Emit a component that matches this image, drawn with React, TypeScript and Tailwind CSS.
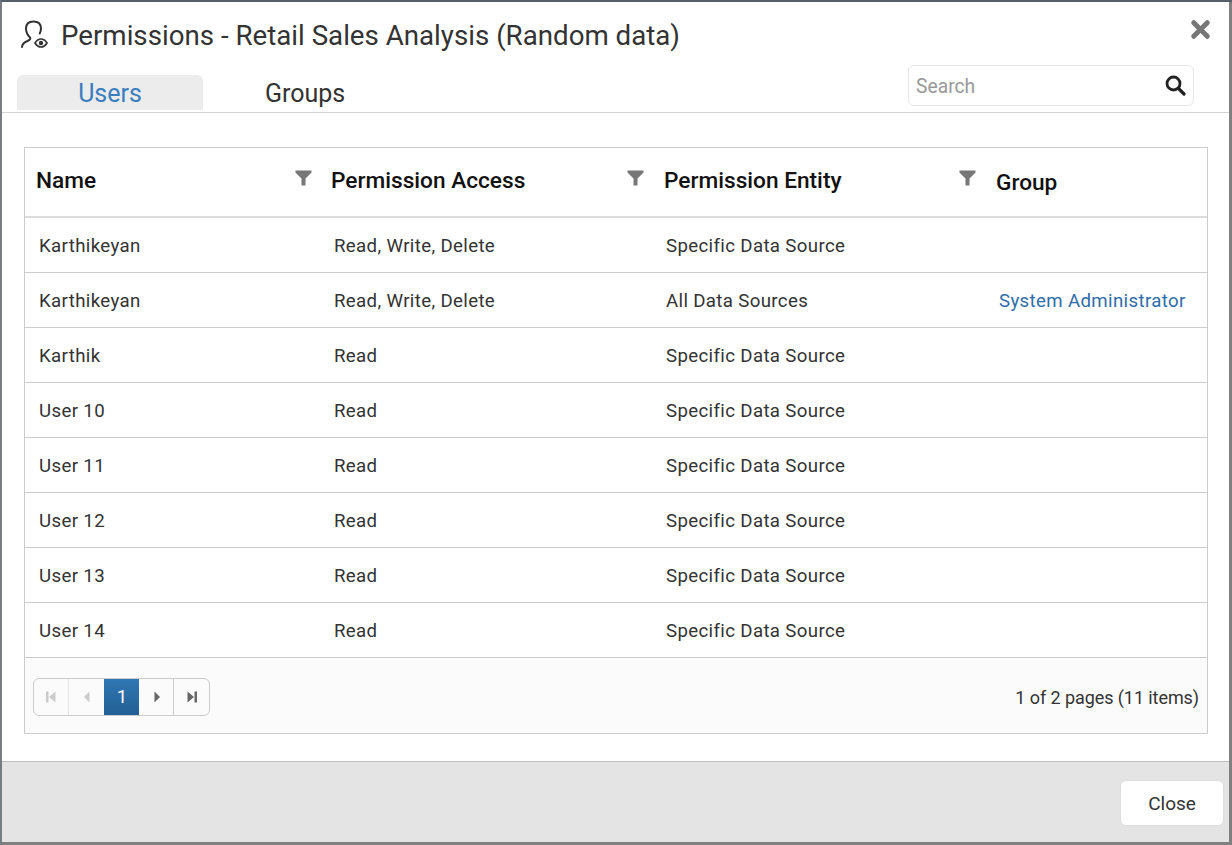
import { X } from "lucide-react";

const rows = [
  { name: "Karthikeyan", access: "Read, Write, Delete", entity: "Specific Data Source", group: "" },
  { name: "Karthikeyan", access: "Read, Write, Delete", entity: "All Data Sources", group: "System Administrator" },
  { name: "Karthik", access: "Read", entity: "Specific Data Source", group: "" },
  { name: "User 10", access: "Read", entity: "Specific Data Source", group: "" },
  { name: "User 11", access: "Read", entity: "Specific Data Source", group: "" },
  { name: "User 12", access: "Read", entity: "Specific Data Source", group: "" },
  { name: "User 13", access: "Read", entity: "Specific Data Source", group: "" },
  { name: "User 14", access: "Read", entity: "Specific Data Source", group: "" },
];

function FilterIcon() {
  return (
    <svg width="17" height="16" viewBox="0 0 17 16" className="fill-[#777777]">
      <path d="M0.5 0.5h16v2L10.5 8.5V15.5H6.5V8.5L0.5 2.5z" />
    </svg>
  );
}

function PermissionIcon() {
  return (
    <svg width="28" height="29" viewBox="0 0 28 29" fill="none" stroke="#333333" strokeWidth="2" strokeLinecap="round">
      <path d="M1 27c.3-3.500 2.500-4.800 5.500-6 2.500-1 3.200-2 2.500-3.500C6.500 15 5 12 5 8.500 5 4 8 1.500 12.500 1.500S20 4 20 8.500c0 1.800-.5 3.600-1.300 5" />
      <path d="M14 23c1.600-2.600 3.700-4 6-4s4.400 1.400 6 4c-1.600 2.600-3.700 4-6 4s-4.400-1.400-6-4z" strokeWidth="1.700" />
      <circle cx="20" cy="23" r="2.200" fill="#333333" stroke="none" />
    </svg>
  );
}

function SearchIcon() {
  return (
    <svg width="21" height="21" viewBox="0 0 21 21" fill="none" stroke="#222222">
      <circle cx="8.500" cy="8.500" r="6.500" strokeWidth="2.800" />
      <path d="M13.500 13.500L19 19" strokeWidth="3.200" strokeLinecap="round" />
    </svg>
  );
}

function PagerIcon({ kind, color }: { kind: "first" | "prev" | "next" | "last"; color: string }) {
  return (
    <svg width="14" height="14" viewBox="0 0 14 14" style={{ fill: color }}>
      {kind === "first" && <path d="M2 1.500h2.500v11H2zM11.500 1.500v11L5 7z" />}
      {kind === "prev" && <path d="M9.500 1.500v11L4 7z" />}
      {kind === "next" && <path d="M4.500 1.500v11L10 7z" />}
      {kind === "last" && <path d="M9.500 1.500H12v11H9.500zM2.500 1.500v11L9 7z" />}
    </svg>
  );
}

export default function App() {
  return (
    <div className="w-[1232px] h-[845px] bg-[#808080] border-t-2 border-t-[#56606a] border-l-2 border-l-[#777d82] pr-[3px] pb-[3px] overflow-hidden font-['Roboto',sans-serif] text-[#333333]">
      <div className="h-full flex flex-col bg-white">
        <div className="h-[111px] relative border-b border-[#d4d4d4] shrink-0">
          <div className="flex items-start pl-[19px] pt-[18px] gap-[12px]">
            <PermissionIcon />
            <h1 className="text-[27.700px] leading-[32px] font-normal">Permissions - Retail Sales Analysis (Random data)</h1>
          </div>
          <button className="absolute right-[15px] top-[14px] text-[#777777]">
            <X size={27} strokeWidth={4.500} />
          </button>
          <div className="absolute left-[15px] bottom-[2px] flex items-end">
            <div className="w-[186px] h-[35px] bg-[#ececec] rounded-t-[6px] text-center text-[25px] leading-[37px] text-[#3a7ebf]">Users</div>
            <div className="w-[204px] h-[35px] text-center text-[25px] leading-[37px]">Groups</div>
          </div>
          <div className="absolute left-[906px] top-[63px] w-[286px] h-[41px] border border-[#e6e6e6] rounded-[6px] flex items-center justify-between pl-[7px] pr-[7px]">
            <span className="text-[19.300px] leading-[41px] pt-[1px] text-[#999999]">Search</span>
            <SearchIcon />
          </div>
        </div>

        <div className="flex-1 pl-[22px] pr-[21px] pt-[34px]">
          <div className="w-[1184px] border border-[#cccccc]">
            <div className="flex h-[70px] border-b-2 border-[#dddddd] text-[22.670px] font-medium text-[#111111]">
              <div className="w-[295px] flex items-center justify-between pl-[11px] pr-[8px]">
                <span className="leading-[62px] mb-[2px]">Name</span>
                <span className="mb-[8px]"><FilterIcon /></span>
              </div>
              <div className="w-[332px] flex items-center justify-between pl-[11px] pr-[8px]">
                <span className="leading-[62px] mb-[2px]">Permission Access</span>
                <span className="mb-[8px]"><FilterIcon /></span>
              </div>
              <div className="w-[332px] flex items-center justify-between pl-[12px] pr-[8px]">
                <span className="leading-[62px] mb-[2px]">Permission Entity</span>
                <span className="mb-[8px]"><FilterIcon /></span>
              </div>
              <div className="flex-1 flex items-center pl-[12px] pt-[2px]">Group</div>
            </div>
            {rows.map((r, i) => (
              <div key={i} className="flex h-[55px] items-center border-b border-[#cccccc] pt-[2px] text-[18.670px] tracking-[0.35px]">
                <div className="w-[295px] pl-[14px]">{r.name}</div>
                <div className="w-[332px] pl-[14px]">{r.access}</div>
                <div className="w-[332px] pl-[14px]">{r.entity}</div>
                <div className="flex-1 pl-[15px] text-[#2f6ca8]">{r.group}</div>
              </div>
            ))}
            <div className="h-[75px] bg-[#fbfbfb] flex items-center justify-between pl-[8px] pr-[8px]">
              <div className="flex h-[38px] w-[177px] mt-[2px] border border-[#cccccc] rounded-[6px] overflow-hidden bg-[#fbfbfb]">
                <div className="w-[35px] border-r border-[#e4e4e4] flex items-center justify-center"><PagerIcon kind="first" color="#cccccc" /></div>
                <div className="w-[35px] flex items-center justify-center"><PagerIcon kind="prev" color="#cccccc" /></div>
                <div className="w-[35px] pl-[1px] bg-gradient-to-b from-[#3078b4] to-[#235f94] text-white text-[18.670px] flex items-center justify-center">1</div>
                <div className="w-[35px] pl-[1px] border-r border-[#cccccc] flex items-center justify-center"><PagerIcon kind="next" color="#666666" /></div>
                <div className="flex-1 flex items-center justify-center"><PagerIcon kind="last" color="#666666" /></div>
              </div>
              <span className="text-[18px] tracking-[-0.08px] mt-[3px]">1 of 2 pages (11 items)</span>
            </div>
          </div>
        </div>

        <div className="h-[81px] shrink-0 bg-[#e4e4e4] border-t border-[#bdbdbd] flex items-center justify-end pr-[5px]">
          <button className="w-[104px] h-[46px] mt-[2px] pt-[2px] bg-white border border-[#dddddd] rounded-[6px] text-[19px]">Close</button>
        </div>
      </div>
    </div>
  );
}
